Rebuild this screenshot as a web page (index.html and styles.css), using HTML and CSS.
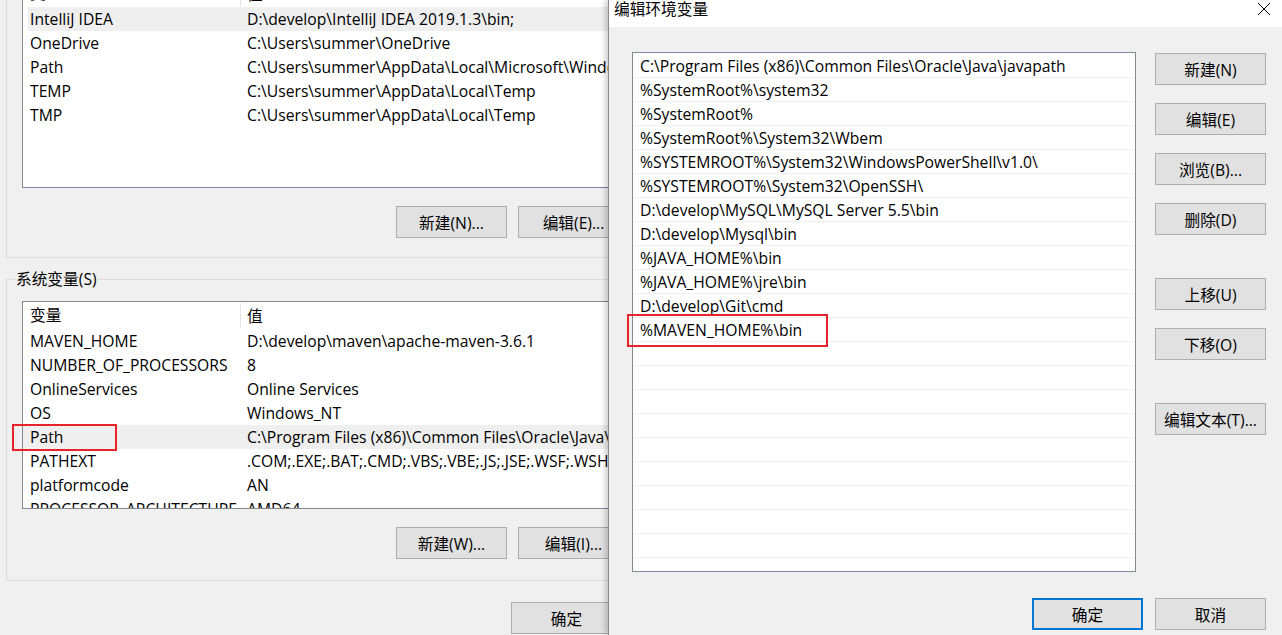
FILE: index.html
```html
<!DOCTYPE html>
<html lang="zh-CN">
<head>
  <meta charset="UTF-8">
  <title>编辑环境变量</title>
  <link rel="stylesheet" href="styles.css">
</head>
<body>
<div class="desk">

  <div class="env-win">
    <div class="group user-group">
      <div class="list user-list">
        <div class="list-head"><span class="c1">变量</span><span class="c2">值</span></div>
        <div class="row sel inset"><span class="c1">IntelliJ IDEA</span><span class="c2">D:\develop\IntelliJ IDEA 2019.1.3\bin;</span></div>
        <div class="row"><span class="c1">OneDrive</span><span class="c2">C:\Users\summer\OneDrive</span></div>
        <div class="row"><span class="c1">Path</span><span class="c2">C:\Users\summer\AppData\Local\Microsoft\WindowsApps;</span></div>
        <div class="row"><span class="c1">TEMP</span><span class="c2">C:\Users\summer\AppData\Local\Temp</span></div>
        <div class="row"><span class="c1">TMP</span><span class="c2">C:\Users\summer\AppData\Local\Temp</span></div>
      </div>
      <div class="btn-row">
        <button class="btn">新建(N)...</button>
        <button class="btn">编辑(E)...</button>
      </div>
    </div>

    <div class="group sys-group">
      <div class="group-label">系统变量(S)</div>
      <div class="list sys-list">
        <div class="list-head"><span class="c1">变量</span><span class="c2">值</span></div>
        <div class="row"><span class="c1">MAVEN_HOME</span><span class="c2">D:\develop\maven\apache-maven-3.6.1</span></div>
        <div class="row"><span class="c1">NUMBER_OF_PROCESSORS</span><span class="c2">8</span></div>
        <div class="row"><span class="c1">OnlineServices</span><span class="c2">Online Services</span></div>
        <div class="row"><span class="c1">OS</span><span class="c2">Windows_NT</span></div>
        <div class="row sel"><span class="c1">Path</span><span class="c2">C:\Program Files (x86)\Common Files\Oracle\Java\javapath;</span></div>
        <div class="row"><span class="c1">PATHEXT</span><span class="c2">.COM;.EXE;.BAT;.CMD;.VBS;.VBE;.JS;.JSE;.WSF;.WSH;.MSC</span></div>
        <div class="row"><span class="c1">platformcode</span><span class="c2">AN</span></div>
        <div class="row"><span class="c1">PROCESSOR_ARCHITECTURE</span><span class="c2">AMD64</span></div>
      </div>
      <span class="mark mark-path"></span>
      <div class="btn-row">
        <button class="btn">新建(W)...</button>
        <button class="btn">编辑(I)...</button>
      </div>
    </div>

    <div class="foot-row">
      <button class="btn">确定</button>
    </div>
  </div>

  <div class="dialog">
    <div class="titlebar">
      <span class="title">编辑环境变量</span>
      <svg class="close" width="14" height="14" viewBox="0 0 14 14">
        <path d="M1 1 L13 13 M13 1 L1 13" stroke="#000" stroke-width="1" fill="none"/>
      </svg>
    </div>
    <div class="dlg-body">
      <div class="path-list">
        <div class="prow">C:\Program Files (x86)\Common Files\Oracle\Java\javapath</div>
        <div class="prow">%SystemRoot%\system32</div>
        <div class="prow">%SystemRoot%</div>
        <div class="prow">%SystemRoot%\System32\Wbem</div>
        <div class="prow">%SYSTEMROOT%\System32\WindowsPowerShell\v1.0\</div>
        <div class="prow">%SYSTEMROOT%\System32\OpenSSH\</div>
        <div class="prow">D:\develop\MySQL\MySQL Server 5.5\bin</div>
        <div class="prow">D:\develop\Mysql\bin</div>
        <div class="prow">%JAVA_HOME%\bin</div>
        <div class="prow">%JAVA_HOME%\jre\bin</div>
        <div class="prow">D:\develop\Git\cmd</div>
        <div class="prow"><span class="mark mark-maven"></span>%MAVEN_HOME%\bin</div>
        <div class="prow"></div>
        <div class="prow"></div>
        <div class="prow"></div>
        <div class="prow"></div>
        <div class="prow"></div>
        <div class="prow"></div>
        <div class="prow"></div>
        <div class="prow"></div>
        <div class="prow"></div>
        <div class="prow last"></div>
      </div>
      <div class="side-btns">
        <button class="btn">新建(N)</button>
        <button class="btn">编辑(E)</button>
        <button class="btn">浏览(B)...</button>
        <button class="btn">删除(D)</button>
        <button class="btn gap-big">上移(U)</button>
        <button class="btn">下移(O)</button>
        <button class="btn gap-big">编辑文本(T)...</button>
      </div>
    </div>
    <div class="dlg-foot">
      <button class="btn default">确定</button>
      <button class="btn">取消</button>
    </div>
  </div>

</div>
</body>
</html>
```

FILE: styles.css
```css
body { margin: 0; font-family: "Open Sans", "Noto Sans CJK SC", sans-serif; font-size: 15.7px; color: #000; background: #f0f0f0; }
.desk { position: relative; width: 1282px; height: 635px; overflow: hidden; }

/* buttons */
.btn {
  width: 111px; height: 32px; padding: 0; box-sizing: border-box; flex-shrink: 0;
  border: 1px solid #adadad; background: #e1e1e1; color: #000;
  font: inherit; white-space: nowrap;
}
.btn.default { border: 2px solid #0078d7; }

/* background window */
.env-win {
  position: absolute; left: 0; top: 0; width: 720px; height: 635px;
  padding-left: 6px; box-sizing: border-box; overflow: hidden; background: #f0f0f0;
}
.group { position: relative; border: 1px solid #dcdcdc; width: 690px; padding: 0 15px; }
.user-group { margin-top: -40px; padding-top: 18px; padding-bottom: 19px; }
.sys-group { margin-top: 21px; padding-bottom: 21px; }
.group-label {
  width: fit-content; margin: -11px 0 0 -7px; padding: 0 1px;
  height: 20px; line-height: 20px; background: #f0f0f0;
}

.list { border: 1px solid #828790; background: #fff; overflow: hidden; box-sizing: border-box; }
.user-list { height: 209px; }
.sys-list { height: 208px; margin-top: 12px; }
.list-head { display: flex; height: 27px; align-items: center; white-space: nowrap; }
.list-head .c1 { width: 210px; padding-left: 7px; border-right: 1px solid #e5e5e5; height: 25px; line-height: 25px; }
.list-head .c2 { padding-left: 6px; }
.row { display: flex; height: 24px; line-height: 24px; white-space: nowrap; }
.row .c1 { width: 211px; padding-left: 7px; flex-shrink: 0; }
.row .c2 { padding-left: 6px; }
.row.sel { background: #efefef; }
.row.inset { margin-left: 5px; }
.row.inset .c1 { width: 211px; padding-left: 2px; }

.btn-row { display: flex; gap: 11px; margin-top: 18px; padding-left: 374px; }
.foot-row { display: flex; gap: 11px; margin-top: 21px; padding-left: 505px; }

.mark { position: absolute; border: 2px solid #e8232b; box-sizing: border-box; }
.mark-path { left: 5px; top: 144px; width: 105px; height: 27px; }
.mark-maven { left: -7px; top: -4px; width: 201px; height: 33px; }

/* front dialog */
.dialog {
  position: absolute; left: 608px; top: 0; width: 674px; height: 635px;
  box-sizing: border-box; border-left: 1px solid #8c8c8c; background: #f0f0f0;
  box-shadow: -3px 0 5px rgba(0,0,0,0.18);
}
.titlebar { display: flex; justify-content: space-between; height: 27px; background: #fff; }
.title { padding-left: 5px; line-height: 19px; }
.close { margin: 2px 11px 0 0; }
.dlg-body { display: flex; padding: 25px 0 0 23px; }
.path-list {
  width: 504px; height: 520px; box-sizing: border-box; padding-top: 1px;
  border: 1px solid #828790; background: #fff;
}
.prow {
  position: relative; height: 24px; line-height: 23px; box-sizing: border-box;
  margin: 0 1px; padding: 1px 0 0 6px; border-bottom: 1px solid #f0f0f0; white-space: nowrap;
}
.prow.last { height: 13px; border-bottom: none; }
.side-btns { display: flex; flex-direction: column; gap: 18px; margin: 1px 0 0 19px; }
.side-btns .gap-big { margin-top: 25px; }
.dlg-foot { display: flex; justify-content: flex-end; gap: 12px; margin-top: 26px; padding-right: 16px; }
```
